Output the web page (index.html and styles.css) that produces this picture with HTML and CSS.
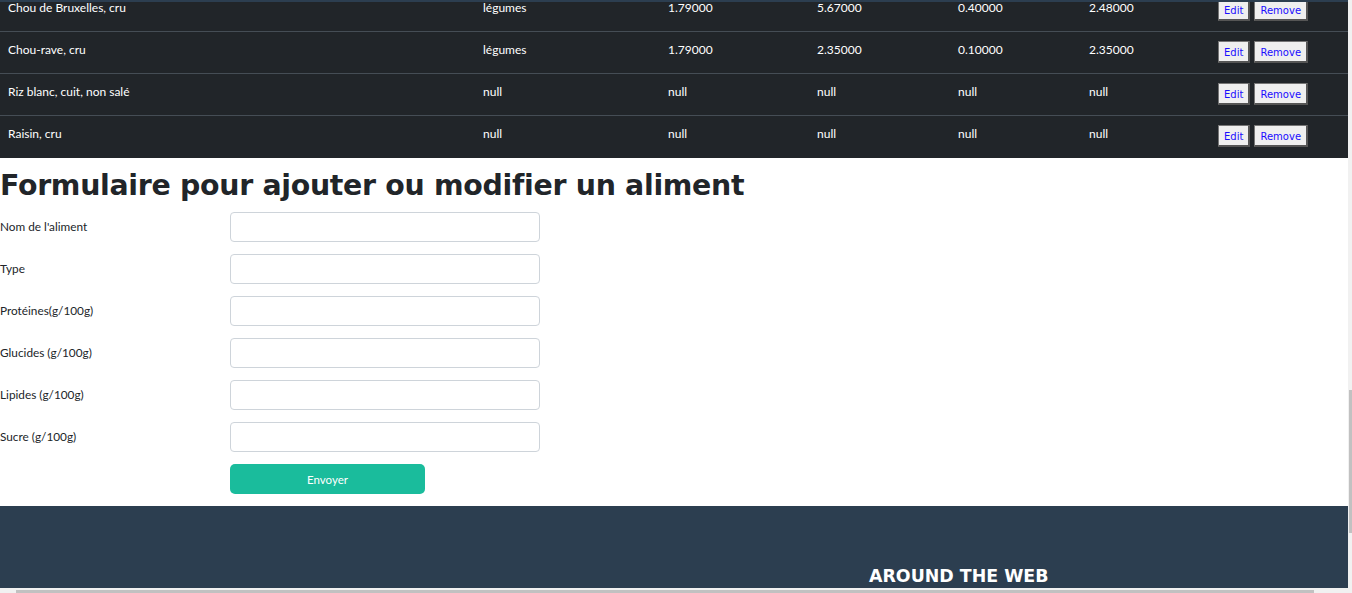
FILE: index.html
```html
<!DOCTYPE html>
<html lang="fr">
<head>
<meta charset="utf-8">
<title>Aliments</title>
<link rel="stylesheet" href="styles.css">
</head>
<body>
<div class="page">
  <div class="topbar"></div>
  <div class="table-clip">
    <table class="foods">
      <colgroup>
        <col class="c1"><col class="c2"><col class="c3"><col class="c4"><col class="c5"><col class="c6"><col class="c7">
      </colgroup>
      <tbody>
        <tr><td>Chou de Bruxelles, cru</td><td>légumes</td><td>1.79000</td><td>5.67000</td><td>0.40000</td><td>2.48000</td><td><button class="btn">Edit</button> <button class="btn">Remove</button></td></tr>
        <tr><td>Chou-rave, cru</td><td>légumes</td><td>1.79000</td><td>2.35000</td><td>0.10000</td><td>2.35000</td><td><button class="btn">Edit</button> <button class="btn">Remove</button></td></tr>
        <tr><td>Riz blanc, cuit, non salé</td><td>null</td><td>null</td><td>null</td><td>null</td><td>null</td><td><button class="btn">Edit</button> <button class="btn">Remove</button></td></tr>
        <tr><td>Raisin, cru</td><td>null</td><td>null</td><td>null</td><td>null</td><td>null</td><td><button class="btn">Edit</button> <button class="btn">Remove</button></td></tr>
      </tbody>
    </table>
  </div>

  <section class="form-section">
    <h2 class="form-title">Formulaire pour ajouter ou modifier un aliment</h2>
    <form class="food-form">
      <label class="lbl" for="f1">Nom de l'aliment</label><input class="inp" id="f1" type="text">
      <label class="lbl" for="f2">Type</label><input class="inp" id="f2" type="text">
      <label class="lbl" for="f3">Protéines(g/100g)</label><input class="inp" id="f3" type="text">
      <label class="lbl" for="f4">Glucides (g/100g)</label><input class="inp" id="f4" type="text">
      <label class="lbl" for="f5">Lipides (g/100g)</label><input class="inp" id="f5" type="text">
      <label class="lbl" for="f6">Sucre (g/100g)</label><input class="inp" id="f6" type="text">
      <span></span><button class="submit" type="button">Envoyer</button>
    </form>
  </section>

  <footer class="footer">
    <h4 class="footer-title">AROUND THE WEB</h4>
  </footer>
</div>
<div class="vscroll"><div class="vthumb"></div></div>
<div class="hscroll"><div class="hthumb"></div></div>
</body>
</html>
```

FILE: styles.css
```css
html, body {
  margin: 0;
  padding: 0;
  overflow: hidden;
  background: #ffffff;
}
body {
  font-family: Lato, "Liberation Sans", sans-serif;
  color: #212529;
}
.page {
  width: 1348px;
}
.topbar {
  height: 2px;
  background: #2c3e50;
}
.table-clip {
  height: 156px;
  overflow: hidden;
  background: #212529;
}
.foods {
  margin-top: -13px;
  width: 1348px;
  border-collapse: collapse;
  table-layout: fixed;
  color: #ffffff;
  font-size: 12px;
  line-height: 18px;
}
.c1 { width: 475px; }
.c2 { width: 185px; }
.c3 { width: 149px; }
.c4 { width: 141px; }
.c5 { width: 131px; }
.c6 { width: 129px; }
.c7 { width: 138px; }
.foods td {
  border-top: 1px solid #454d55;
  padding: 9px 8px 10px;
  vertical-align: top;
  height: 22px;
  white-space: nowrap;
}
.btn {
  height: 22px;
  padding: 2px 5px 0;
  margin: 0 1px 0 0;
  font-family: "DejaVu Sans", Verdana, sans-serif;
  font-size: 10px;
  color: #1a0dff;
  background: #efefef;
  border-width: 1px 2px 2px 1px;
  border-style: solid;
  border-color: #767676 #555 #555 #767676;
  vertical-align: top;
}
.form-section {
  padding: 10px 0 12px;
}
.form-title {
  margin: 0 0 8px;
  font-family: "DejaVu Sans", Inter, sans-serif;
  font-weight: 700;
  font-size: 28.4px;
  line-height: 36px;
  letter-spacing: -0.3px;
  color: #212529;
  white-space: nowrap;
}
.food-form {
  display: grid;
  grid-template-columns: 230px 310px;
  row-gap: 12px;
  align-items: center;
}
.lbl {
  font-size: 11.8px;
  color: #212529;
  margin-top: -1px;
}
.inp {
  box-sizing: border-box;
  height: 30px;
  width: 310px;
  margin: 0;
  border: 1px solid #ced4da;
  border-radius: 4px;
  background: #fff;
}
.submit {
  width: 195px;
  height: 30px;
  border: none;
  border-radius: 5px;
  background: #1abc9c;
  color: #fff;
  font-family: Lato, sans-serif;
  font-size: 11.5px;
}
.footer {
  background: #2c3e50;
  height: 90px;
  padding-top: 60px;
  box-sizing: border-box;
}
.footer-title {
  margin: 0 0 0 869px;
  font-family: "DejaVu Sans", sans-serif;
  font-weight: 700;
  font-size: 17.4px;
  line-height: 20px;
  color: #fff;
}
.vscroll {
  position: fixed;
  right: 0;
  top: 0;
  width: 4px;
  height: 588px;
  background: #f1f1f1;
}
.vthumb {
  position: absolute;
  left: 1px;
  top: 390px;
  width: 3px;
  height: 143px;
  background: #c1c1c1;
}
.hscroll {
  position: fixed;
  left: 0;
  bottom: 0;
  width: 1352px;
  height: 5px;
  background: #f1f1f1;
}
.hthumb {
  position: absolute;
  left: 16px;
  top: 2px;
  width: 1298px;
  height: 3px;
  background: #c1c1c1;
}
```
